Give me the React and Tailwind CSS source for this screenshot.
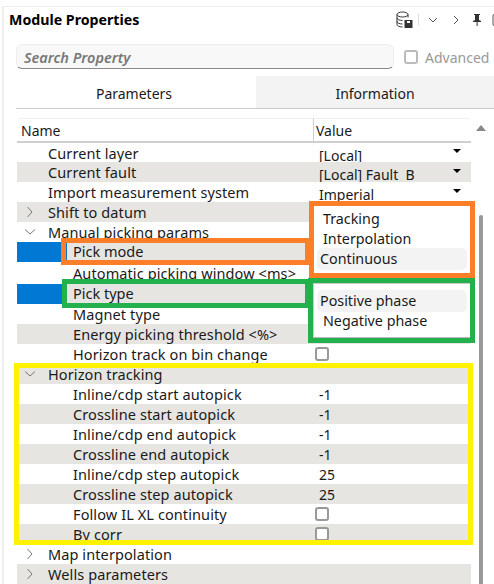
import React from "react";

const font = { fontFamily: '"Noto Sans", "Open Sans", sans-serif' };

const rows = [
  { name: "Current layer", value: "[Local]", combo: true, h: "h-[19px]" },
  { name: "Current fault", value: "[Local] Fault  B", combo: true, grey: true },
  { name: "Import measurement system", value: "Imperial", combo: true },
  { name: "Shift to datum", group: "closed", grey: true },
  { name: "Manual picking params", group: "open" },
  { name: "Pick mode", sub: true, grey: true },
  { name: "Automatic picking window <ms>", sub: true, h: "h-[22px]" },
  { name: "Pick type", sub: true, grey: true },
  { name: "Magnet type", sub: true },
  { name: "Energy picking threshold <%>", sub: true, grey: true },
  { name: "Horizon track on bin change", sub: true, check: true },
  { name: "Horizon tracking", group: "open", grey: true },
  { name: "Inline/cdp start autopick", sub: true, value: "-1" },
  { name: "Crossline start autopick", sub: true, value: "-1", grey: true },
  { name: "Inline/cdp end autopick", sub: true, value: "-1" },
  { name: "Crossline end autopick", sub: true, value: "-1", grey: true },
  { name: "Inline/cdp step autopick", sub: true, value: "25" },
  { name: "Crossline step autopick", sub: true, value: "25", grey: true },
  { name: "Follow IL XL continuity", sub: true, check: true },
  { name: "By corr", sub: true, check: true, grey: true },
  { name: "Map interpolation", group: "closed" },
  { name: "Wells parameters", group: "closed", grey: true },
];

function Chevron({ open }) {
  return (
    <svg width="12" height="12" viewBox="0 0 12 12" fill="none" stroke="#777" strokeWidth="1">
      {open ? <path d="M1 3.5 6 8l5-4.5" /> : <path d="M3.5 1 8 6l-4.5 5" />}
    </svg>
  );
}

function Box({ className }) {
  return <span className={`block w-[14px] h-[14px] rounded-[3px] border-2 border-[#999] bg-white ${className || ""}`} />;
}

function Row({ row }) {
  return (
    <div className={`flex overflow-hidden ${row.h || "h-5"} ${row.grey ? "bg-[#e6e5e1]" : "bg-white"}`}>
      <div className="w-[296px] flex items-center shrink-0">
        <span className="w-[7px]" />
        <span className="w-[12px] flex justify-center">
          {row.group && <Chevron open={row.group === "open"} />}
        </span>
        <span className={`${row.sub ? "ml-[37px]" : "ml-[12px]"} text-[14.5px] leading-5 whitespace-nowrap text-[#1a1a1a] tracking-[0.1px]`}>
          {row.name}
        </span>
      </div>
      <div className="relative flex-1 flex items-center">
        {row.check && <Box className="ml-[2px] mt-[-1px]" />}
        {row.value && (
          <span className={`ml-[6px] text-[14px] leading-5 whitespace-pre text-[#1a1a1a] ${row.combo ? "mt-[6px]" : "pt-[2px]"}`}>
            {row.value}
          </span>
        )}
        {row.combo && <span className="absolute right-[10px] bottom-[9px] w-0 h-0 border-x-[4px] border-x-transparent border-t-[4px] border-t-black" />}
      </div>
    </div>
  );
}

function Item({ label, active }) {
  return (
    <div className={`h-[22px] w-[150px] rounded-[5px] flex items-center text-[14.3px] text-[#1a1a1a] ${active ? "bg-[#f3f3f3] pl-[3px]" : "pl-[6px]"}`}>
      {label}
    </div>
  );
}

export default function App() {
  return (
    <div style={font} className="relative w-[494px] h-[584px] overflow-hidden bg-white">
      <div className="ml-[2px] mt-[6px] h-[578px] border-l-2 border-t border-[#eeeeee]">
        <div className="h-[28px] flex items-center pb-[3px]">
          <span className="ml-[5px] text-[14.2px] font-bold text-black">Module Properties</span>
          <div className="ml-auto flex items-center mr-[-12px]">
            <svg width="17" height="17" viewBox="0 0 17 17" fill="none" stroke="#333" strokeWidth="1">
              <ellipse cx="6.5" cy="3.5" rx="5.5" ry="2.5" />
              <path d="M1 3.5v10c0 1.4 2.5 2.5 5.5 2.5M12 3.5v3M1 7c0 1.4 2.5 2.5 5.5 2.5M1 10.5C1 11.9 3.5 13 6.5 13" />
              <rect x="8.5" y="9" width="8" height="8" fill="#333" stroke="none" />
              <rect x="11" y="10" width="3" height="2" fill="#fff" stroke="none" />
            </svg>
            <span className="ml-[5px] w-px h-[11px] bg-[#ddd]" />
            <span className="ml-[9px]">
              <svg width="10" height="10" viewBox="0 0 10 10" fill="none" stroke="#555"><path d="M1 3l4 4 4-4" /></svg>
            </span>
            <span className="ml-[13px]">
              <svg width="10" height="10" viewBox="0 0 10 10" fill="none" stroke="#555"><path d="M3 1l4 4-4 4" /></svg>
            </span>
            <span className="ml-[11px]">
              <svg width="10" height="12" viewBox="0 0 10 12" fill="#333"><path d="M2 0h6v1H7v5l2 1v1H5.6v4h-1V8H1V7l2-1V1H2z" /></svg>
            </span>
            <span className="ml-[10px]">
              <svg width="14" height="14" viewBox="0 0 14 14" fill="none" stroke="#555"><rect x="1" y="1" width="11" height="12" rx="2" /><circle cx="6" cy="7" r="2.5" /></svg>
            </span>
          </div>
        </div>

        <div className="flex items-center mt-[9px] ml-[12px]">
          <div className="w-[378px] h-[25px] rounded-[6px] bg-[#f8f8f8] border border-[#eeeeee] border-b-[#8a8a8a] flex items-center pl-[7px] pt-[2px] text-[14.5px] font-semibold italic text-[#777777]">
            Search Property
          </div>
          <Box className="ml-[10px] border-[#bbbbbb]" />
          <span className="ml-[7px] pt-[2px] text-[14px] text-[#999999] whitespace-nowrap">Advanced</span>
        </div>

        <div className="flex mt-[7px] ml-[12px] h-[33px] w-[478px] border-b border-[#cccccc] text-[14px] text-[#1a1a1a]">
          <div className="w-[240px] flex items-center justify-center pr-[4px] pt-[2px]">Parameters</div>
          <div className="w-[238px] bg-[#f3f3f3] flex items-center justify-center pt-[2px]">Information</div>
        </div>

        <div className="ml-[13px] mt-[9px] w-[454px]">
          <div className="h-[25px] flex items-center border-b-2 border-[#cfcfcf] rounded-t-[5px] border-t border-t-[#eeeeee] text-[14px] text-[#1a1a1a]">
            <span className="ml-[4px] w-[292px]">Name</span>
            <span className="self-stretch w-px bg-[#cfcfcf]" />
            <span className="ml-[2px]">Value</span>
          </div>
          {rows.map((row) => (
            <Row key={row.name} row={row} />
          ))}
        </div>
      </div>

      <svg className="absolute left-[475px] top-[124px]" width="12" height="8" viewBox="0 0 12 8" fill="#888"><path d="M1 7h10L6 1z" /></svg>
      <div className="absolute left-[479px] top-[215px] w-[4px] h-[369px] bg-[#999999] rounded-t-[2px]" />

      <div className="absolute left-[17px] top-[242px] w-[44px] h-[20px] bg-[#0078d4]" />
      <div className="absolute left-[61px] top-[238px] w-[249px] h-[27px] border-[5px] border-[#fd7e28] bg-[#e6e5e1] flex items-center pl-[7px]">
        <span className="absolute left-0 top-0 bottom-0 w-px bg-[#0078d4]" />
        <span className="text-[14.5px] text-[#1a1a1a]">Pick mode</span>
      </div>

      <div className="absolute left-[17px] top-[284px] w-[46px] h-[20px] bg-[#0078d4]" />
      <div className="absolute left-[62px] top-[279px] w-[248px] h-[29px] border-[5px] border-[#22b14c] bg-[#e6e5e1] flex items-center pl-[6px]">
        <span className="text-[14.5px] text-[#1a1a1a]">Pick type</span>
      </div>

      <div className="absolute left-[309px] top-[201px] w-[166px] h-[77px] border-[5px] border-[#fd7e28] bg-white pl-[3px] pt-[2px]">
        <Item label="Tracking" />
        <div className="-mt-[2px]"><Item label="Interpolation" /></div>
        <div className="-mt-[2px]"><Item label="Continuous" active /></div>
      </div>

      <div className="absolute left-[308px] top-[278px] w-[167px] h-[65px] border-[5px] border-[#22b14c] bg-white">
        <div className="h-full border border-[#cccccc] border-r-0 border-b-[#bbbbbb] pl-[3px] pt-[6px]">
          <Item label="Positive phase" active />
          <div className="-mt-[2px]"><Item label="Negative phase" /></div>
        </div>
      </div>

      <div className="absolute left-[14px] top-[363px] w-[459px] h-[182px] border-[5px] border-[#fff200]" />
    </div>
  );
}
